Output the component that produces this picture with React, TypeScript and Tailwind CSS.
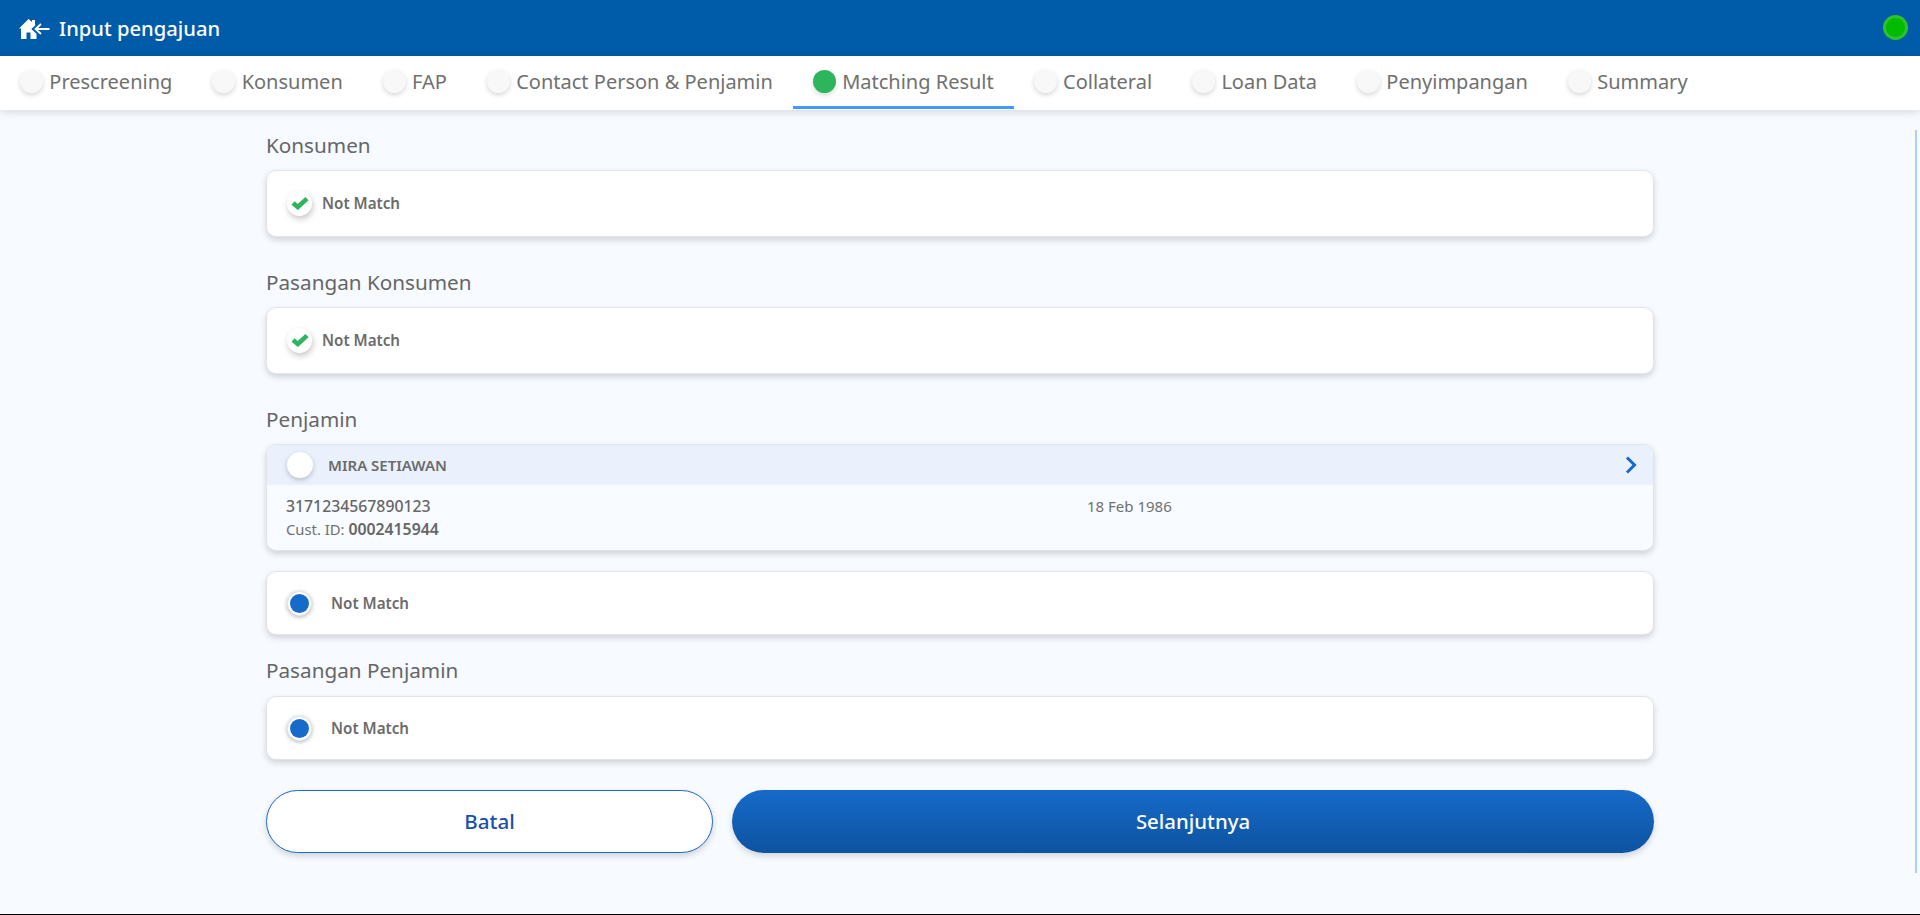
import React from 'react';

const tabs = ['Prescreening', 'Konsumen', 'FAP', 'Contact Person & Penjamin', 'Matching Result', 'Collateral', 'Loan Data', 'Penyimpangan', 'Summary'];

function HomeBack() {
  return (
    <svg width="31" height="21" viewBox="0 0 31 21" className="mt-[3px] shrink-0">
      <path d="M9.5 0 L13 3 V1 H16 V5.5 L20 9.5 H17.5 V20 H11.5 V13.5 H7.5 V20 H2 V9.5 H0 Z" fill="#fff" />
      <path d="M22 4.5 L16 10 L22 15.5" fill="none" stroke="#005ca9" strokeWidth="5" />
      <path d="M22 5 L16.5 10 L22 15 M17 10 H30.5" fill="none" stroke="#fff" strokeWidth="1.8" />
    </svg>
  );
}

function Tab({ label, active }: { label: string; active?: boolean }) {
  return (
    <div className="relative flex h-full items-center gap-[6.3px] px-5 pb-[3px]">
      <span className={`h-[23px] w-[23px] rounded-full shadow-[0_2px_5px_rgba(0,0,0,0.16)] ${active ? 'bg-[#2db55d]' : 'bg-[#f8f8f8]'}`} />
      <span className="text-[20px] leading-[27px] text-[#707070]">{label}</span>
      {active && <span className="absolute bottom-[1px] left-0 right-0 h-[3px] bg-[#3d9bff]" />}
    </div>
  );
}

function CheckRow() {
  return (
    <div className="flex h-[67px] items-center rounded-[10px] border border-[#e2e4ea] bg-white pb-[1px] pl-[20px] shadow-[0_3px_6px_rgba(0,0,0,0.16)]">
      <span className="flex h-[25px] w-[25px] items-center justify-center rounded-full bg-white shadow-[1px_3px_6px_rgba(0,0,0,0.22)]">
        <svg width="18" height="14" viewBox="0 0 18 14">
          <path d="M2 7 L6.8 11 L16 2.6" fill="none" stroke="#2db55d" strokeWidth="4.6" />
        </svg>
      </span>
      <span className="ml-[10px] text-[15.2px] font-semibold text-[#6b6b6b]">Not Match</span>
    </div>
  );
}

function RadioRow() {
  return (
    <div className="flex h-[64px] items-center rounded-[10px] border border-[#e2e4ea] bg-white pl-[20px] shadow-[0_3px_6px_rgba(0,0,0,0.16)]">
      <span className="flex h-[25px] w-[25px] items-center justify-center rounded-full border border-[#dbe9fb] bg-white shadow-[0_1px_4px_rgba(0,0,0,0.3)]">
        <span className="h-[19px] w-[19px] rounded-full bg-[#166ac9]" />
      </span>
      <span className="ml-[19px] text-[15.2px] font-semibold text-[#6b6b6b]">Not Match</span>
    </div>
  );
}

function Label({ children }: { children: React.ReactNode }) {
  return <h2 className="text-[20.7px] leading-[27px] text-[#666]">{children}</h2>;
}

export default function App() {
  return (
    <div className="relative flex h-[915px] flex-col overflow-hidden border-b border-black bg-[#f7faff] font-['Noto_Sans',sans-serif]">
      <header className="flex h-[56px] shrink-0 items-center justify-between bg-[#005ca9] pl-[19px] pr-[12px]">
        <div className="flex items-center gap-[9px]">
          <HomeBack />
          <span className="text-[20.2px] font-medium text-white">Input pengajuan</span>
        </div>
        <span className="mb-[1px] h-[25px] w-[25px] rounded-full border-[3px] border-[#2fc02f] bg-[#00bb00]" />
      </header>

      <nav className="z-10 flex h-[54px] shrink-0 items-center bg-white shadow-[0_2px_8px_rgba(0,0,0,0.14)]">
        {tabs.map((t) => (
          <Tab key={t} label={t} active={t === 'Matching Result'} />
        ))}
      </nav>

      <main className="mx-auto flex w-[1388px] flex-col pt-[22px]">
        <Label>Konsumen</Label>
        <div className="mt-[11px]"><CheckRow /></div>

        <div className="mt-[32px]"><Label>Pasangan Konsumen</Label></div>
        <div className="mt-[11px]"><CheckRow /></div>

        <div className="mt-[32px]"><Label>Penjamin</Label></div>
        <div className="mt-[11px] overflow-hidden rounded-[10px] border border-[#e2e4ea] bg-[#f8fbff] shadow-[0_3px_6px_rgba(0,0,0,0.16)]">
          <div className="flex h-[40px] items-center justify-between bg-[#eaf1fd] pl-[20px] pr-[16px]">
            <div className="flex items-center">
              <span className="h-[26px] w-[26px] rounded-full bg-white shadow-[0_2px_5px_rgba(0,0,0,0.22)]" />
              <span className="ml-[15px] text-[15px] font-semibold text-[#6b6b6b]">MIRA SETIAWAN</span>
            </div>
            <svg width="12" height="18" viewBox="0 0 12 18">
              <path d="M2 1.5 L9.5 9 L2 16.5" fill="none" stroke="#166ac9" strokeWidth="3" />
            </svg>
          </div>
          <div className="grid h-[65px] grid-cols-[801px_1fr] pl-[19px] pt-[11px]">
            <div>
              <p className="text-[15.8px] leading-[21px] font-medium text-[#666]">3171234567890123</p>
              <p className="mt-[2px] text-[14.8px] leading-[21px] text-[#707070]">
                Cust. ID: <span className="text-[15.8px] font-semibold text-[#666]">0002415944</span>
              </p>
            </div>
            <p className="text-[15px] leading-[21px] text-[#707070]">18 Feb 1986</p>
          </div>
        </div>

        <div className="mt-[20px]"><RadioRow /></div>

        <div className="mt-[22px]"><Label>Pasangan Penjamin</Label></div>
        <div className="mt-[12px]"><RadioRow /></div>

        <div className="mt-[30px] flex gap-[19px]">
          <button className="h-[63px] w-[447px] rounded-full border border-[#1a69c4] bg-white text-[20.6px] font-medium text-[#1a4fae] shadow-[0_3px_6px_rgba(0,0,0,0.16)]">
            Batal
          </button>
          <button className="h-[63px] flex-1 rounded-full bg-gradient-to-b from-[#166ac9] to-[#0d53a0] text-[20.4px] font-medium text-white shadow-[0_3px_6px_rgba(0,0,0,0.16)]">
            Selanjutnya
          </button>
        </div>
      </main>

      <div className="absolute left-[1915px] top-[130px] h-[743px] w-[2px] bg-[#a9d0fa]" />
    </div>
  );
}
